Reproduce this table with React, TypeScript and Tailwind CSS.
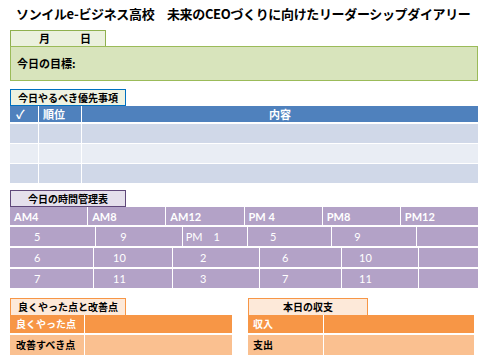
import React from "react";

const jp = { fontFamily: '"Noto Sans CJK JP", "Noto Sans", sans-serif' };
const latin = { fontFamily: 'Lato, "Noto Sans", sans-serif' };

const timeHead = ["AM4", "AM8", "AM12", "PM 4", "PM8", "PM12"];

const timeRows: { t: string; pl: string }[][] = [
  [
    { t: "5", pl: "pl-[24px]" },
    { t: "9", pl: "pl-[24px]" },
    { t: "PM\u30001", pl: "pl-[3px]" },
    { t: "5", pl: "pl-[22px]" },
    { t: "9", pl: "pl-[22px]" },
    { t: "", pl: "" },
  ],
  [
    { t: "6", pl: "pl-[24px]" },
    { t: "10", pl: "pl-[19px]" },
    { t: "2", pl: "pl-[27px]" },
    { t: "6", pl: "pl-[22px]" },
    { t: "10", pl: "pl-[17px]" },
    { t: "", pl: "" },
  ],
  [
    { t: "7", pl: "pl-[24px]" },
    { t: "11", pl: "pl-[19px]" },
    { t: "3", pl: "pl-[27px]" },
    { t: "7", pl: "pl-[22px]" },
    { t: "11", pl: "pl-[17px]" },
    { t: "", pl: "" },
  ],
];

const App: React.FC = () => {
  return (
    <div className="w-[483px] h-[361px] bg-white text-black overflow-hidden" style={jp}>
      {/* title */}
      <div className="h-[30px] pt-[6px] pl-[16px] text-[13px] font-bold leading-[16px] whitespace-nowrap tracking-[-0.35px]">
        ソンイルe-ビジネス高校　未来のCEOづくりに向けたリーダーシップダイアリー
      </div>

      {/* date + goal */}
      <div className="ml-[10px] w-[468px]">
        <div className="w-[96px] h-[16px] border border-b-0 border-[#8fb04f] bg-[#ebf1de] flex items-center text-[11px] font-bold leading-none">
          <span className="ml-[28px]">月</span>
          <span className="ml-[30px]">日</span>
        </div>
        <div className="h-[35px] border border-[#9bbb59] bg-[#d8e4bc] flex items-center pl-[6px] text-[11px] font-bold">
          今日の目標:
        </div>
      </div>

      {/* priorities */}
      <div className="ml-[10px] w-[468px] mt-[8px]">
        <div className="w-[116px] h-[17px] border border-[#0070c0] bg-[#eef2e1] flex items-center justify-center text-[10px] font-bold leading-none">
          今日やるべき優先事項
        </div>
        <div className="flex gap-[1px] h-[16px] text-white text-[11px] font-bold leading-none">
          <div className="w-[28px] bg-[#4f81bd] flex items-center pl-[6px] text-[12px]">✓</div>
          <div className="w-[42px] bg-[#4f81bd] flex items-center pl-[4px]">順位</div>
          <div className="flex-1 bg-[#4f81bd] flex items-center justify-center">内容</div>
        </div>
        <div className="mt-[2px] flex flex-col gap-[1px]">
          {["bg-[#d0d8e8]", "bg-[#e9edf4]", "bg-[#d0d8e8]"].map((bg, i) => (
            <div key={i} className="flex gap-[1px] h-[19px]">
              <div className={`w-[28px] ${bg}`} />
              <div className={`w-[42px] ${bg}`} />
              <div className={`flex-1 ${bg}`} />
            </div>
          ))}
        </div>
      </div>

      {/* time table */}
      <div className="ml-[10px] w-[468px] mt-[7px]">
        <div className="w-[116px] h-[17px] border border-[#60497a] bg-[#e5e0ec] flex items-center justify-center text-[10px] font-bold leading-none">
          今日の時間管理表
        </div>
        <div className="flex gap-[1px] h-[18px] text-white text-[11px] font-bold leading-none" style={latin}>
          {timeHead.map((h) => (
            <div key={h} className="flex-1 bg-[#b3a2c7] flex items-center pl-[4px]">
              {h}
            </div>
          ))}
        </div>
        <div className="mt-[2px] flex flex-col gap-[2px]" style={latin}>
          {timeRows.map((row, i) => (
            <div key={i} className="flex gap-[1px] h-[19px] text-white text-[11px] leading-none">
              {row.map((c, j) => (
                <div key={j} className={`flex-1 bg-[#b3a2c7] flex items-center ${c.pl}`}>
                  {c.t}
                </div>
              ))}
            </div>
          ))}
        </div>
      </div>

      {/* bottom */}
      <div className="flex mt-[10px] ml-[10px] gap-[16px]">
        <div className="w-[222px]">
          <div className="w-[116px] h-[17px] border border-b-0 border-[#f79646] bg-[#fde9d9] flex items-center justify-center text-[10px] font-bold leading-none">
            良くやった点と改善点
          </div>
          <div className="flex gap-[1px] h-[18px] text-[10px] font-bold leading-none">
            <div className="w-[74px] bg-[#f79646] text-white flex items-center pl-[6px]">良くやった点</div>
            <div className="flex-1 bg-[#f79646]" />
          </div>
          <div className="flex gap-[1px] h-[20px] mt-[2px] text-[10px] font-bold leading-none">
            <div className="w-[74px] bg-[#fac090] flex items-center pl-[6px]">改善すべき点</div>
            <div className="flex-1 bg-[#fac090]" />
          </div>
        </div>
        <div className="w-[226px]">
          <div className="w-[120px] h-[17px] border border-b-0 border-[#f79646] bg-[#fde9d9] flex items-center justify-center text-[10px] font-bold leading-none">
            本日の収支
          </div>
          <div className="flex gap-[1px] h-[18px] text-[10px] font-bold leading-none">
            <div className="w-[75px] bg-[#f79646] text-white flex items-center pl-[5px]">収入</div>
            <div className="flex-1 bg-[#f79646]" />
          </div>
          <div className="flex gap-[1px] h-[20px] mt-[2px] text-[10px] font-bold leading-none">
            <div className="w-[75px] bg-[#fac090] flex items-center pl-[5px]">支出</div>
            <div className="flex-1 bg-[#fac090]" />
          </div>
        </div>
      </div>
    </div>
  );
};

export default App;
